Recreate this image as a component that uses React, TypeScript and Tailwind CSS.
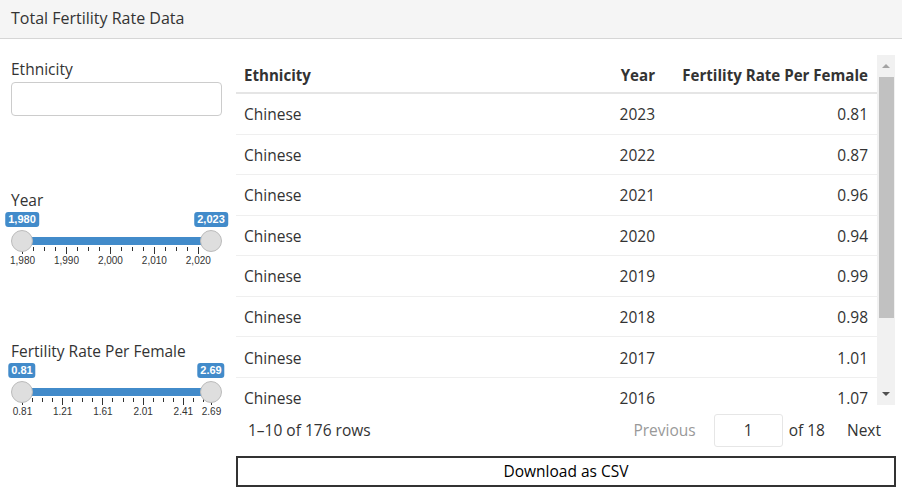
import React from "react";

const rows = [
  ["Chinese", "2023", "0.81"],
  ["Chinese", "2022", "0.87"],
  ["Chinese", "2021", "0.96"],
  ["Chinese", "2020", "0.94"],
  ["Chinese", "2019", "0.99"],
  ["Chinese", "2018", "0.98"],
  ["Chinese", "2017", "1.01"],
  ["Chinese", "2016", "1.07"],
];

type Tick = { v: number; big: boolean; label?: string };

function RangeSlider({
  min,
  max,
  from,
  to,
  fromLabel,
  toLabel,
  ticks,
}: {
  min: number;
  max: number;
  from: number;
  to: number;
  fromLabel: string;
  toLabel: string;
  ticks: Tick[];
}) {
  const span = 189;
  const pos = (v: number) => 11 + ((v - min) / (max - min)) * span;
  return (
    <div className="relative w-[211px] h-[56px] font-['Liberation_Sans',Arial,sans-serif]">
      <div
        className="absolute top-[25px] h-[8px] bg-[#428bca]"
        style={{ left: pos(from), width: pos(to) - pos(from) }}
      />
      {ticks.map((t, i) => (
        <div
          key={i}
          className={`absolute top-[35px] w-px bg-[#333] ${t.big ? "h-[7px]" : "h-[4px]"}`}
          style={{ left: pos(t.v) }}
        />
      ))}
      {ticks
        .filter((t) => t.label)
        .map((t, i) => (
          <div
            key={"l" + i}
            className="absolute top-[43px] text-[10px] leading-[12px] text-[#333] -translate-x-1/2 whitespace-nowrap"
            style={{ left: pos(t.v) + 0.5 }}
          >
            {t.label}
          </div>
        ))}
      {[from, to].map((v, i) => (
        <div
          key={"h" + i}
          className="absolute top-[18px] w-[22px] h-[22px] rounded-full bg-[#dedede] border border-[#bbb] -translate-x-1/2"
          style={{ left: pos(v) }}
        />
      ))}
      {[
        [from, fromLabel],
        [to, toLabel],
      ].map(([v, l], i) => (
        <div
          key={"b" + i}
          className="absolute top-0 h-[15px] px-[3px] rounded-[3px] bg-[#428bca] text-white text-[11px] font-bold leading-[15px] -translate-x-1/2 whitespace-nowrap"
          style={{ left: pos(v as number) }}
        >
          {l}
        </div>
      ))}
    </div>
  );
}

function yearTicks(): Tick[] {
  const t: Tick[] = [];
  for (let v = 1980; v <= 2023; v += 2.5) {
    const big = Math.abs((v - 1980) % 10) < 0.001;
    t.push({ v, big, label: big ? (v / 1000).toFixed(3).replace(".", ",") : undefined });
  }
  return t;
}

function rateTicks(): Tick[] {
  const t: Tick[] = [];
  for (let i = 0; i <= 18; i++) {
    const v = 0.81 + i * 0.1;
    if (v > 2.69 + 0.001) break;
    const big = i % 4 === 0;
    t.push({ v, big, label: big ? v.toFixed(2) : undefined });
  }
  t.push({ v: 2.69, big: true, label: "2.69" });
  return t;
}

export default function App() {
  return (
    <div className="w-[902px] h-[495px] bg-white text-[#333] font-['Open_Sans',sans-serif] overflow-hidden">
      <div className="h-[39px] bg-[#f5f5f5] border-b border-[#d6d6d6] px-[11px] pb-[3px] flex items-center text-[16px]">
        Total Fertility Rate Data
      </div>
      <div className="flex">
        <div className="w-[236px] pl-[11px] pr-[14px] pt-[19px] flex flex-col">
          <div className="text-[15.5px] leading-[22px]">Ethnicity</div>
          <div className="mt-[2px] h-[34px] w-[211px] border border-[#ccc] rounded-[4px]" />
          <div className="mt-[73px] text-[15.5px] leading-[22px]">Year</div>
          <div className="mt-[1px]">
            <RangeSlider
              min={1980}
              max={2023}
              from={1980}
              to={2023}
              fromLabel="1,980"
              toLabel="2,023"
              ticks={yearTicks()}
            />
          </div>
          <div className="mt-[72px] text-[15.5px] leading-[22px]">Fertility Rate Per Female</div>
          <div className="mt-[1px]">
            <RangeSlider
              min={0.81}
              max={2.69}
              from={0.81}
              to={2.69}
              fromLabel="0.81"
              toLabel="2.69"
              ticks={rateTicks()}
            />
          </div>
        </div>
        <div className="w-[660px] pt-[16px] flex flex-col">
          <div className="flex h-[350px]">
            <div className="w-[641px] h-[350px] overflow-hidden text-[15.5px]">
              <div className="flex h-[39px] pt-[3px] items-center border-b-2 border-[#e5e5e5] font-bold text-[15.1px]">
                <div className="w-[327px] pl-[8px]">Ethnicity</div>
                <div className="w-[100px] pr-[8px] text-right">Year</div>
                <div className="flex-1 pr-[9px] text-right">Fertility Rate Per Female</div>
              </div>
              {rows.map((r, i) => (
                <div key={i} className="flex h-[40.57px] pt-[2px] items-center border-b border-[#efefef]">
                  <div className="w-[327px] pl-[8px]">{r[0]}</div>
                  <div className="w-[100px] pr-[8px] text-right">{r[1]}</div>
                  <div className="flex-1 pr-[9px] text-right">{r[2]}</div>
                </div>
              ))}
            </div>
            <div className="w-[18px] h-[350px] bg-[#f1f1f1] flex flex-col items-center">
              <div className="h-[22px] w-full flex items-center justify-center">
                <div className="w-0 h-0 border-l-[4px] border-r-[4px] border-b-[4px] border-l-transparent border-r-transparent border-b-[#a3a3a3]" />
              </div>
              <div className="w-[15px] h-[241px] bg-[#c1c1c1]" />
              <div className="flex-1" />
              <div className="h-[22px] w-full flex items-center justify-center">
                <div className="w-0 h-0 border-l-[4px] border-r-[4px] border-t-[4px] border-l-transparent border-r-transparent border-t-[#505050]" />
              </div>
            </div>
          </div>
          <div className="mt-[9px] h-[33px] flex items-center text-[15.5px]">
            <div className="pl-[12px]">1–10 of 176 rows</div>
            <div className="flex-1" />
            <div className="text-[#999]">Previous</div>
            <div className="ml-[18px] w-[69px] h-[33px] border border-[#e6e6e6] rounded-[3px] flex items-center justify-center">
              1
            </div>
            <div className="ml-[6px]">of 18</div>
            <div className="ml-[22px] mr-[15px]">Next</div>
          </div>
          <div className="mt-[9px] h-[31px] border-2 border-[#333] flex items-center justify-center text-[15.5px] text-black">
            Download as CSV
          </div>
        </div>
      </div>
    </div>
  );
}
